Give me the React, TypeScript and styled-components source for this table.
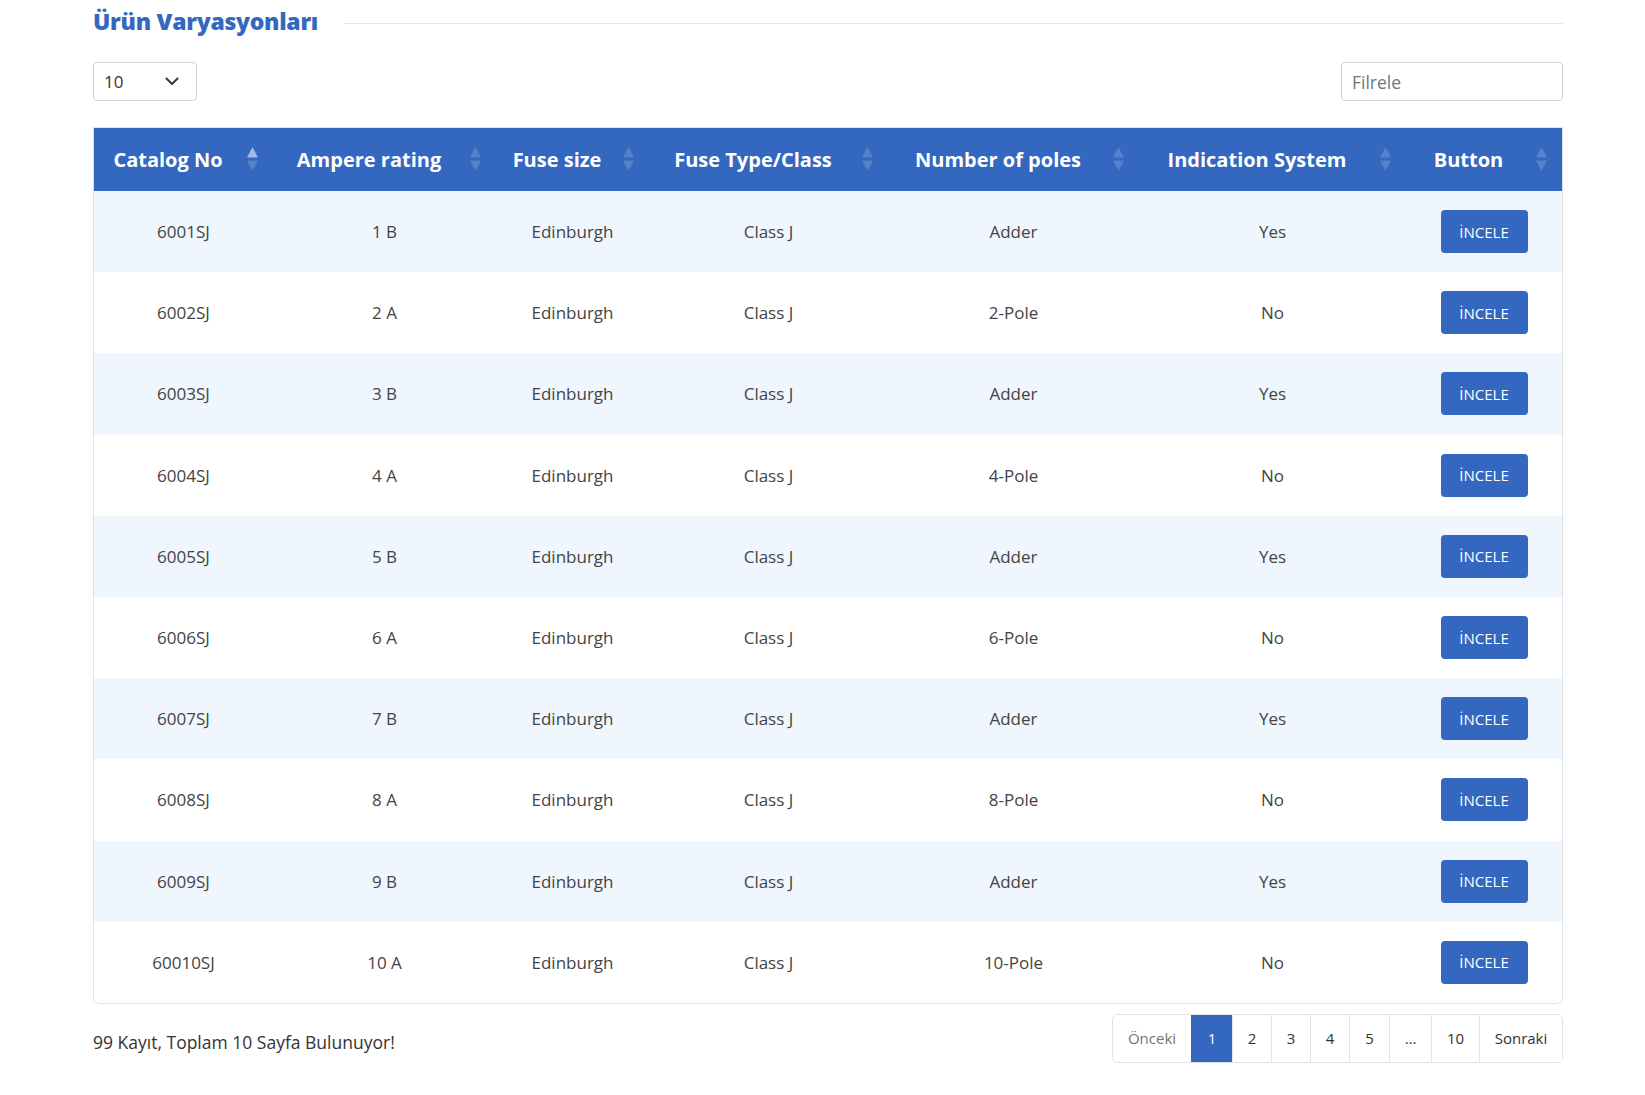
import React from "react";
import styled, { createGlobalStyle } from "styled-components";

const GlobalStyle = createGlobalStyle`
  html, body { margin: 0; padding: 0; background: #ffffff; }
  body { font-family: "Open Sans", "Liberation Sans", sans-serif; color: #444; }
  * { box-sizing: border-box; }
`;

const BLUE = "#3367c0";

const Page = styled.div`
  width: 1645px;
  padding: 0 82px 40px 93px;
`;

const TitleRow = styled.div`
  display: flex;
  align-items: center;
  height: 44px;
`;

const Title = styled.h2`
  margin: 0;
  font-size: 23px;
  font-weight: 800;
  color: ${BLUE};
  line-height: 1.2;
  letter-spacing: -0.3px;
  white-space: nowrap;
`;

const Rule = styled.div`
  flex: 1;
  height: 1px;
  background: #e6e6e6;
  margin-left: 26px;
  margin-top: 2px;
`;

const Controls = styled.div`
  display: flex;
  justify-content: space-between;
  align-items: center;
  margin-top: 18px;
`;

const SelectBox = styled.div`
  width: 104px;
  height: 39px;
  border: 1px solid #ced4da;
  border-radius: 4px;
  display: flex;
  align-items: center;
  justify-content: space-between;
  padding: 0 17px 0 10px;
  font-size: 17px;
  color: #333;
`;

const FilterInput = styled.input`
  width: 222px;
  height: 39px;
  border: 1px solid #ced4da;
  border-radius: 4px;
  padding: 0 10px;
  font-family: "Open Sans", "Liberation Sans", sans-serif;
  font-size: 17.5px;
  color: #333;
  outline: none;
  &::placeholder { color: #6c757d; }
`;

const TableFrame = styled.div`
  margin-top: 26px;
  border: 1px solid #dee2e6;
  border-radius: 0 0 7px 7px;
  overflow: hidden;
`;

const Table = styled.table`
  width: 100%;
  border-collapse: collapse;
  table-layout: fixed;
`;

const HeadRow = styled.tr`
  background: ${BLUE};
  height: 63px;
`;

const Th = styled.th`
  padding: 0 15px 0 10px;
  color: #ffffff;
  font-size: 20px;
  font-weight: 700;
  white-space: nowrap;
`;

const ThInner = styled.div`
  display: flex;
  align-items: center;
`;

const ThLabel = styled.span`
  flex: 1;
  text-align: center;
`;

const SortIcon = styled.svg`
  width: 11px;
  height: 25px;
  margin-left: 15px;
  flex: none;
`;

const BodyRow = styled.tr<{ $striped: boolean }>`
  height: 81.2px;
  background: ${(p) => (p.$striped ? "#eff6fd" : "#ffffff")};
`;

const Td = styled.td`
  text-align: center;
  font-size: 17px;
  color: #444;
  padding: 0 10px;
`;

const ActionButton = styled.button`
  width: 87px;
  height: 43px;
  border: none;
  border-radius: 4px;
  background: ${BLUE};
  color: #ffffff;
  font-family: "Open Sans", "Liberation Sans", sans-serif;
  font-size: 15px;
  cursor: pointer;
  padding: 0;
`;

const Footer = styled.div`
  display: flex;
  justify-content: space-between;
  align-items: center;
  margin-top: 10px;
`;

const Summary = styled.div`
  font-size: 17.5px;
  color: #333;
  padding-top: 8px;
`;

const Pager = styled.div`
  display: flex;
  height: 49px;
  border: 1px solid #dee2e6;
  border-radius: 6px;
  overflow: hidden;
`;

const PageItem = styled.div<{ $active?: boolean; $muted?: boolean; $w: number }>`
  width: ${(p) => p.$w}px;
  display: flex;
  align-items: center;
  justify-content: center;
  font-size: 15px;
  border-left: 1px solid #dee2e6;
  background: ${(p) => (p.$active ? BLUE : "#ffffff")};
  color: ${(p) => (p.$active ? "#ffffff" : p.$muted ? "#6c757d" : "#333")};
  &:first-child { border-left: none; }
  ${(p) => (p.$active ? "border-left-color: " + BLUE + ";" : "")}
`;

const columns = [
  { label: "Catalog No", w: 179, active: true },
  { label: "Ampere rating", w: 223 },
  { label: "Fuse size", w: 153 },
  { label: "Fuse Type/Class", w: 239 },
  { label: "Number of poles", w: 251 },
  { label: "Indication System", w: 267 },
  { label: "Button", w: 156 },
];

const rows = Array.from({ length: 10 }, (_, i) => {
  const n = i + 1;
  const odd = n % 2 === 1;
  return {
    catalog: `600${n}SJ`,
    ampere: `${n} ${odd ? "B" : "A"}`,
    size: "Edinburgh",
    type: "Class J",
    poles: odd ? "Adder" : `${n}-Pole`,
    indication: odd ? "Yes" : "No",
  };
});

const Sort = ({ active }: { active?: boolean }) => (
  <SortIcon viewBox="0 0 11 25">
    <polygon points="5.5,0 11,10.5 0,10.5" fill="#ffffff" fillOpacity={active ? 0.55 : 0.18} />
    <polygon points="0,13.5 11,13.5 5.5,24" fill="#ffffff" fillOpacity={0.18} />
  </SortIcon>
);

const Chevron = () => (
  <svg width="14" height="9" viewBox="0 0 14 9">
    <polyline points="1.5,1.5 7,7 12.5,1.5" fill="none" stroke="#343a40" strokeWidth="2" strokeLinecap="round" strokeLinejoin="round" />
  </svg>
);

export default function App() {
  const pages = [
    { t: "Önceki", w: 78, muted: true },
    { t: "1", w: 41, active: true },
    { t: "2", w: 39 },
    { t: "3", w: 39 },
    { t: "4", w: 39 },
    { t: "5", w: 40 },
    { t: "…", w: 42 },
    { t: "10", w: 48 },
    { t: "Sonraki", w: 83 },
  ];
  return (
    <>
      <GlobalStyle />
      <Page>
        <TitleRow>
          <Title>Ürün Varyasyonları</Title>
          <Rule />
        </TitleRow>
        <Controls>
          <SelectBox>
            <span>10</span>
            <Chevron />
          </SelectBox>
          <FilterInput placeholder="Filrele" />
        </Controls>
        <TableFrame>
          <Table>
            <colgroup>
              {columns.map((c) => (
                <col key={c.label} style={{ width: c.w }} />
              ))}
            </colgroup>
            <thead>
              <HeadRow>
                {columns.map((c) => (
                  <Th key={c.label}>
                    <ThInner>
                      <ThLabel>{c.label}</ThLabel>
                      <Sort active={c.active} />
                    </ThInner>
                  </Th>
                ))}
              </HeadRow>
            </thead>
            <tbody>
              {rows.map((r, i) => (
                <BodyRow key={r.catalog} $striped={i % 2 === 0}>
                  <Td>{r.catalog}</Td>
                  <Td>{r.ampere}</Td>
                  <Td>{r.size}</Td>
                  <Td>{r.type}</Td>
                  <Td>{r.poles}</Td>
                  <Td>{r.indication}</Td>
                  <Td>
                    <ActionButton>İNCELE</ActionButton>
                  </Td>
                </BodyRow>
              ))}
            </tbody>
          </Table>
        </TableFrame>
        <Footer>
          <Summary>99 Kayıt, Toplam 10 Sayfa Bulunuyor!</Summary>
          <Pager>
            {pages.map((p) => (
              <PageItem key={p.t} $w={p.w} $active={p.active} $muted={p.muted}>
                {p.t}
              </PageItem>
            ))}
          </Pager>
        </Footer>
      </Page>
    </>
  );
}
